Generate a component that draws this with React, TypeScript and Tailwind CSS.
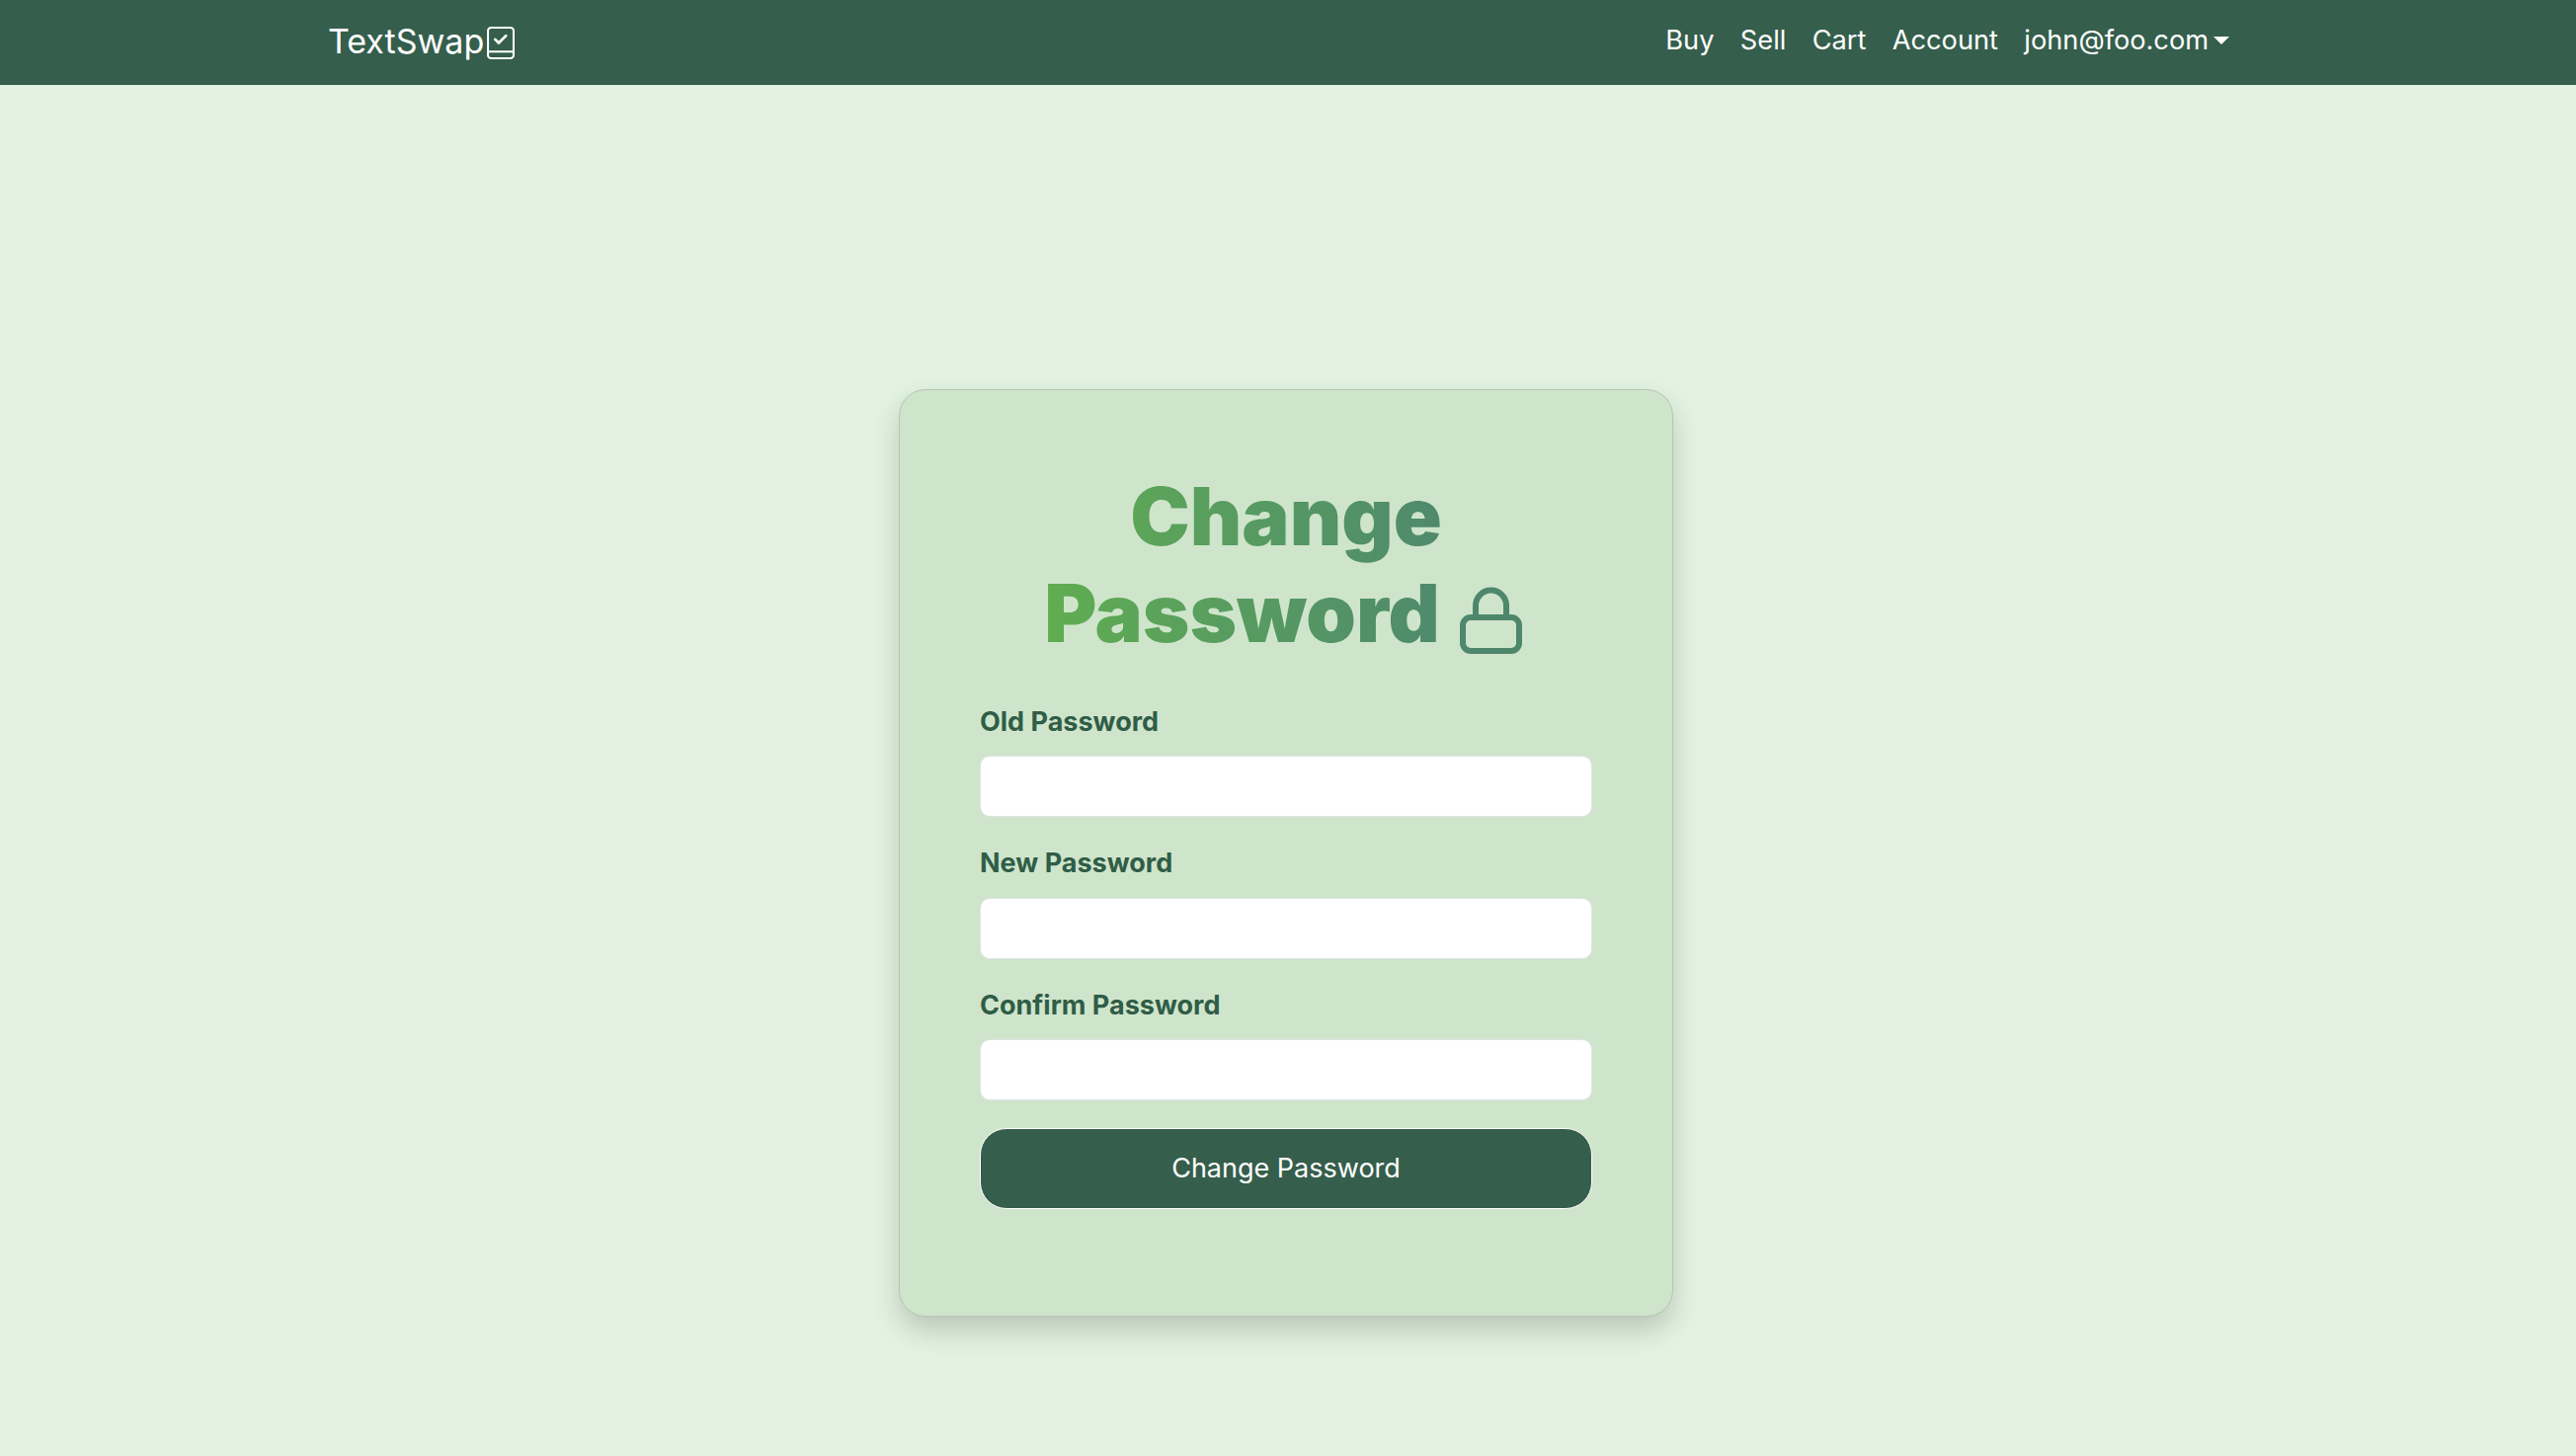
import React from "react";

const inter = { fontFamily: '"Inter", sans-serif' };

function BookCheck() {
  return (
    <svg viewBox="0 0 27 32" fill="none" stroke="#fff" preserveAspectRatio="none" className="w-[28px] h-[33px] ml-[3px]">
      <rect x="1" y="1" width="25" height="30" rx="3" strokeWidth="2" />
      <path d="M1 24.500H26" strokeWidth="2" />
      <path d="M8 12.500L11.500 16L18.500 9" strokeWidth="2.600" strokeLinecap="round" strokeLinejoin="round" />
    </svg>
  );
}

function Field({ label }: { label: string }) {
  return (
    <div className="mb-[27px] w-full">
      <label className="block text-[27px] leading-[40.8px] font-bold text-[#2f5d47] mb-[13.6px]">{label}</label>
      <input type="password" className="block w-full h-[62px] rounded-[10px] bg-white border border-[#dee2e6]" />
    </div>
  );
}

export default function App() {
  return (
    <div style={inter} className="min-h-[1474px] bg-[#e3f3e1] flex flex-col">
      <nav className="h-[86px] bg-[#355e4c] flex items-center justify-between pl-[332px] pr-[351px] text-white">
        <div className="flex items-center">
          <span className="text-[34px] leading-none mb-[2px]">TextSwap</span>
          <BookCheck />
        </div>
        <div className="flex items-center gap-[26.4px] text-[27.2px] leading-[40.8px] mb-[4px]">
          <span>Buy</span>
          <span>Sell</span>
          <span>Cart</span>
          <span>Account</span>
          <span className="flex items-center">
            john@foo.com
            <span className="ml-[5px] w-0 h-0 border-x-[8px] border-x-transparent border-t-[8px] border-t-white" />
          </span>
        </div>
      </nav>
      <main className="flex justify-center pt-[308px] pr-[4px]">
        <div className="w-[784px] h-[939px] rounded-[27px] border border-[#b4c7b2] bg-[#cfe5cb] px-[81px] pt-[80px] shadow-[0_13.6px_27.2px_rgba(0,0,0,0.18)]">
          <div className="text-center mb-[41px]">
            <h1 className="inline-block text-center text-[81px] leading-[97.5px] font-black bg-gradient-to-r from-[#60ad50] to-[#4c8270] bg-clip-text text-transparent">
              Change
              <br />
              Password
              <svg viewBox="0 0 63 68" className="inline-block w-[63px] h-[68px] ml-[20px] mr-[6px] align-[-12px]" fill="none" stroke="#4e876c" strokeWidth="6">
                <path d="M16 30V19a15.500 15.500 0 0 1 31 0V30" />
                <rect x="3" y="31" width="57" height="34" rx="8" />
              </svg>
            </h1>
          </div>
          <Field label="Old Password" />
          <Field label="New Password" />
          <Field label="Confirm Password" />
          <button className="w-full h-[82px] mt-[1px] rounded-[27px] bg-[#355e4c] border border-white text-white text-[27px]">Change Password</button>
        </div>
      </main>
    </div>
  );
}
